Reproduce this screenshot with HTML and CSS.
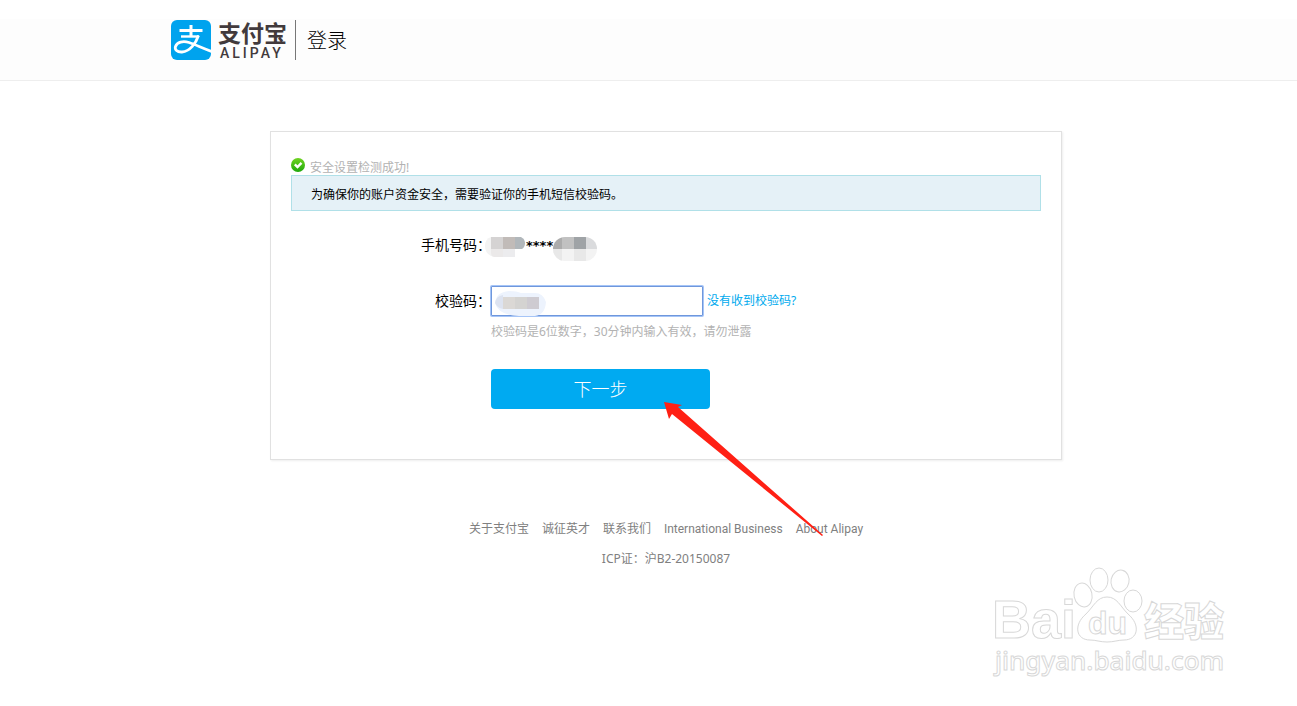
FILE: index.html
```html
<!DOCTYPE html>
<html lang="zh-CN">
<head>
  <meta charset="UTF-8">
  <title>登录 - 支付宝</title>
  <link rel="stylesheet" href="styles.css">
</head>
<body>
  <header class="header">
    <div class="header-inner">
      <a class="logo" href="#">
        <svg class="logo-mark" width="40" height="40" viewBox="0 0 40 40" aria-hidden="true">
          <rect width="40" height="40" rx="6" fill="#00a3ee"/>
          <g fill="none" stroke="#fff">
            <path d="M8.500 10.500h23M20 5v11" stroke-width="3"/>
            <path d="M10 16.500h18" stroke-width="2.400"/>
            <path d="M27.500 15.500C25 23 19 31.500 11 32c-5 .3-7.500-2.500-6.500-5.500C6 22 12 20.500 18 22.500c7 2.300 13 5.500 23 9" stroke-width="2.800"/>
          </g>
        </svg>
        <span class="logo-text">
          <span class="logo-cn">支付宝</span>
          <span class="logo-en">ALIPAY</span>
        </span>
      </a>
      <h1 class="title">登录</h1>
    </div>
  </header>

  <main class="main">
    <section class="panel">
      <p class="status">
        <svg width="14" height="14" viewBox="0 0 14 14" aria-hidden="true">
          <defs>
            <linearGradient id="ok" x1="0" y1="0" x2="0" y2="1">
              <stop offset="0" stop-color="#6fd321"/>
              <stop offset="1" stop-color="#1fa80c"/>
            </linearGradient>
          </defs>
          <circle cx="7" cy="7" r="7" fill="url(#ok)"/>
          <path d="M3.800 6.300l2.700 2.700 4-4.200" fill="none" stroke="#fff" stroke-width="2.400"/>
        </svg>
        <span>安全设置检测成功!</span>
      </p>
      <p class="tip">为确保你的账户资金安全，需要验证你的手机短信校验码。</p>

      <form class="form">
        <div class="row">
          <span class="label">手机号码：</span>
          <span class="phone">
            <svg class="phone-head" width="41" height="24" viewBox="0 0 41 24" aria-hidden="true">
              <path d="M6 0h8v20H9Q0 18 0 9 0 2 6 0z" fill="#f3f3f3"/>
              <path d="M6 12h12v8H10q-4 0-4-4z" fill="#ebe9e9"/>
              <path d="M18 12h12v8H18z" fill="#ececee"/>
              <path d="M6 0h12v12H6z" fill="#d5d3d3"/>
              <path d="M18 0h12v12H18z" fill="#c1bbb8"/>
              <path d="M30 0h6q4 2 4 6t-3 6h-7z" fill="#b1b7bb"/>
            </svg>
            <span class="stars">****</span>
            <svg width="44" height="24" viewBox="0 0 44 24" aria-hidden="true">
              <defs><clipPath id="pill"><rect width="44" height="24" rx="12"/></clipPath></defs>
              <g clip-path="url(#pill)">
                <path d="M0 0h44v24H0z" fill="#f3f3f3"/>
                <path d="M0 0h9v12H0z" fill="#acacac"/>
                <path d="M9 0h12v12H9z" fill="#c1c1c1"/>
                <path d="M21 0h12v12H21z" fill="#9fa3a6"/>
                <path d="M33 0h11v12H33z" fill="#dadbdd"/>
                <path d="M0 12h9v12H0zM21 12h12v12H21z" fill="#e8e8e8"/>
              </g>
            </svg>
          </span>
        </div>
        <div class="row">
          <label class="label" for="code">校验码：</label>
          <span class="code-box">
            <input class="code" id="code" type="text" maxlength="6">
            <svg class="code-mask" width="52" height="27" viewBox="0 0 52 27" aria-hidden="true">
              <path d="M0 13Q1 2 14 1q8 0 12 2h14q8 0 11 9-1 13-11 14H24Q3 25 0 13z" fill="#edf3fd"/>
              <path d="M0 13Q1 6 8 5v14Q2 18 0 13z" fill="#dde3f0"/>
              <path d="M8 7h12v12H8z" fill="#dbd8d5"/>
              <path d="M20 7h12v12H20z" fill="#d4d3d1"/>
              <path d="M32 7h12v12H32z" fill="#cecbd1"/>
            </svg>
          </span>
          <a class="resend" href="#">没有收到校验码?</a>
        </div>
        <p class="hint">校验码是6位数字，30分钟内输入有效，请勿泄露</p>
        <button class="next" type="submit">下一步</button>
      </form>

      <svg class="arrow" width="160" height="135" viewBox="0 0 160 135" aria-hidden="true">
        <path d="M0 0l18 3-4 2L159 133l-1 1L8 12l-3 5z" fill="#ff2014"/>
      </svg>
    </section>
  </main>

  <footer class="footer">
    <nav class="links">
      <a href="#">关于支付宝</a>
      <a href="#">诚征英才</a>
      <a href="#">联系我们</a>
      <a href="#">International Business</a>
      <a href="#">About Alipay</a>
    </nav>
    <p class="icp">ICP证：沪B2-20150087</p>
  </footer>

  <svg class="watermark" width="240" height="116" viewBox="0 0 240 116" role="img" aria-label="Baidu 经验">
    <g class="watermark-lines">
      <ellipse cx="91" cy="28" rx="9" ry="12" transform="rotate(-12 91 28)"/>
      <ellipse cx="107" cy="13" rx="9" ry="12"/>
      <ellipse cx="128" cy="14" rx="9" ry="11" transform="rotate(12 128 14)"/>
      <ellipse cx="141" cy="34" rx="9" ry="11"/>
      <path d="M115 30c10 0 13 9 21 17 13 11 10 26-4 26-6 0-10 2-17 2s-11-2-17-2c-14 0-17-15-4-26 8-8 11-17 21-17z"/>
      <text class="wm-name" x="0" y="71">Bai</text>
      <text class="wm-du" x="96" y="67">du</text>
      <text class="wm-cn" x="152" y="69">经验</text>
      <text class="wm-url" x="3" y="103">jingyan.baidu.com</text>
    </g>
  </svg>
</body>
</html>
```
FILE: styles.css
```css
* {
  box-sizing: border-box;
}

body {
  margin: 0;
  padding-top: 19px;
  position: relative;
  min-height: 100vh;
  background: #fff;
  color: #000;
  font: 12px/18px "Noto Sans", "Noto Sans CJK SC", sans-serif;
}

p, h1 {
  margin: 0;
}

a {
  text-decoration: none;
}

svg {
  display: block;
  flex: none;
}

.header {
  padding-left: 35px;
  background: #fdfdfd;
  border-bottom: 1px solid #eee;
}

.header-inner {
  display: flex;
  align-items: flex-start;
  max-width: 990px;
  height: 61px;
  margin: 0 auto;
  padding-top: 1px;
}

.logo {
  display: flex;
  gap: 7px;
  height: 40px;
  padding-right: 8px;
  border-right: 1px solid #777;
  color: #423a3c;
}

.logo-text {
  display: flex;
  flex-direction: column;
}

.logo-cn {
  font-size: 23px;
  font-weight: bold;
  line-height: 27px;
}

.logo-en {
  padding-left: 2px;
  font: 500 14px/13px Roboto, sans-serif;
  letter-spacing: 3px;
}

.title {
  padding-left: 11px;
  font-size: 20px;
  font-weight: 300;
  line-height: 42px;
}

.main {
  padding: 50px 0 50px 35px;
}

.panel {
  position: relative;
  max-width: 792px;
  margin: 0 auto;
  padding: 26px 20px 50px;
  border: 1px solid #e1e1e1;
  box-shadow: 1px 1px 2px #eee;
}

.status {
  display: flex;
  gap: 5px;
  height: 17px;
  line-height: 20px;
  color: #b2b2b2;
}

.tip {
  padding: 10px 19px 6px;
  border: 1px solid #b0e0e8;
  background: #e5f1f7;
}

.form {
  padding-top: 18px;
}

.row {
  display: flex;
  align-items: center;
  height: 32px;
  margin-bottom: 24px;
}

.label {
  width: 200px;
  text-align: right;
  font-size: 14px;
}

.phone {
  display: flex;
  align-items: center;
  padding-top: 8px;
}

.phone-head {
  margin-left: -6px;
}

.stars {
  font: bold 13px/24px "DejaVu Sans", sans-serif;
  padding-bottom: 6px;
}

.code-box {
  position: relative;
}

.code {
  display: block;
  width: 212px;
  height: 30px;
  padding: 6px;
  border: 1px solid #6f97dc;
  border-radius: 1px;
  box-shadow: 0 0 0 1px #a6c5f7;
  outline: none;
  font-size: 14px;
}

.code-mask {
  position: absolute;
  top: 4px;
  left: 4px;
}

.resend {
  padding-left: 4px;
  color: #00aaee;
}

.hint {
  margin-top: -18px;
  padding-left: 200px;
  color: #b2b2b2;
}

.next {
  display: block;
  width: 219px;
  height: 40px;
  margin: 28px 0 0 200px;
  padding: 0 0 2px;
  border: 0;
  border-radius: 4px;
  background: #00aaf1;
  color: #fff;
  font: 300 18px/38px "Noto Sans CJK SC", sans-serif;
  cursor: pointer;
}

.arrow {
  position: absolute;
  top: 270px;
  left: 393px;
}

.footer {
  padding-left: 35px;
  text-align: center;
  color: #808080;
}

.links {
  display: flex;
  justify-content: center;
  gap: 13px;
  padding: 10px 0 12px;
  font-family: Roboto, "Noto Sans CJK SC", sans-serif;
}

.links a {
  color: #808080;
}

.watermark {
  position: absolute;
  top: 567px;
  right: 65px;
}

.watermark-lines {
  fill: #fff;
  stroke: #d8d8d8;
  stroke-width: 1px;
}

.wm-name {
  font: bold 54px "Liberation Sans", sans-serif;
}

.wm-du {
  font: bold 32px "Liberation Sans", sans-serif;
}

.wm-cn {
  font: 900 40px "Noto Sans CJK SC", sans-serif;
}

.wm-url {
  font: 500 26px "Noto Sans", sans-serif;
}
```
